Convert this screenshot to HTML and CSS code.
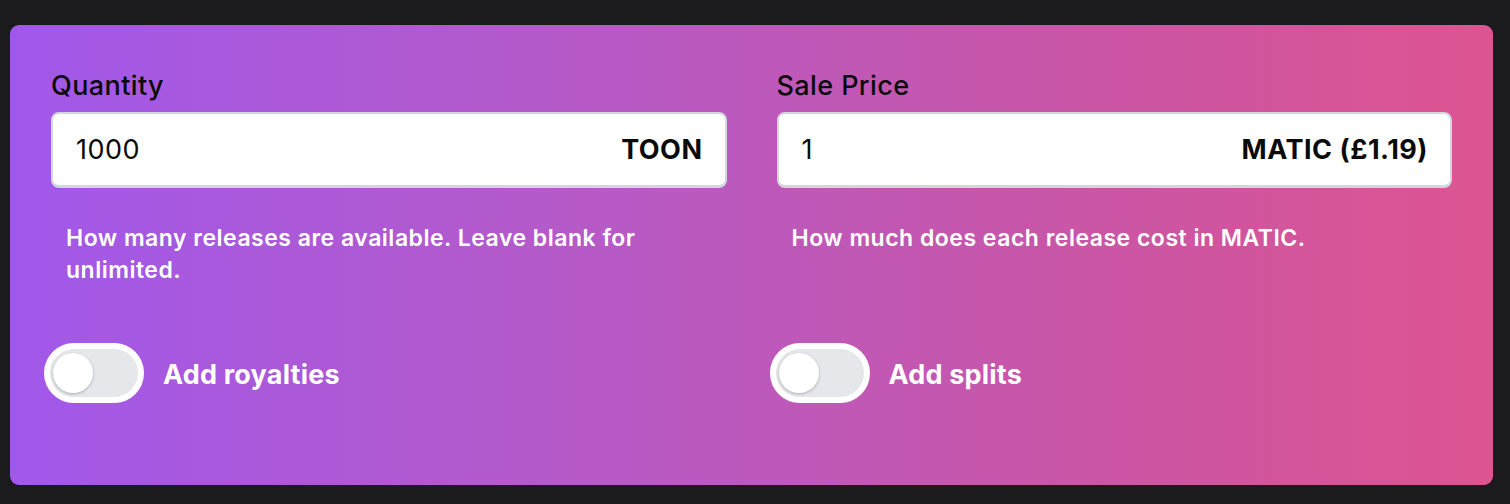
FILE: index.html
```html
<!DOCTYPE html>
<html>
<head>
<meta charset="utf-8">
<link rel="stylesheet" href="styles.css">
</head>
<body>
<div class="card">
  <div class="grid">
    <div class="field">
      <label class="label">Quantity</label>
      <div class="input">
        <span class="value">1000</span>
        <span class="unit">TOON</span>
      </div>
      <p class="help">How many releases are available. Leave blank for unlimited.</p>
    </div>
    <div class="field">
      <label class="label">Sale Price</label>
      <div class="input">
        <span class="value">1</span>
        <span class="unit">MATIC (£1.19)</span>
      </div>
      <p class="help">How much does each release cost in MATIC.</p>
    </div>
    <div class="toggle-row">
      <span class="toggle"><span class="knob"></span></span>
      <span class="toggle-label">Add royalties</span>
    </div>
    <div class="toggle-row">
      <span class="toggle"><span class="knob"></span></span>
      <span class="toggle-label">Add splits</span>
    </div>
  </div>
</div>
</body>
</html>
```

FILE: styles.css
```css
html, body {
  margin: 0;
  padding: 0;
  background: #1b1b1d;
  font-family: Inter, "Noto Sans", sans-serif;
}
body {
  padding: 25px 17px 19px 10px;
}
.card {
  height: 460px;
  box-sizing: border-box;
  border-radius: 9px;
  background: linear-gradient(90deg, #a158ea 0%, #b75ac6 40%, #c856a8 70%, #dd5491 100%);
  padding: 46px 41px 0 41px;
}
.grid {
  display: grid;
  grid-template-columns: 1fr 1fr;
  column-gap: 50px;
}
.field {
  display: flex;
  flex-direction: column;
}
.label {
  font-size: 27px;
  font-weight: 500;
  letter-spacing: 0.4px;
  color: #0b0b0b;
  line-height: 30px;
  margin-bottom: 11px;
}
.input {
  height: 76px;
  box-sizing: border-box;
  background: #fff;
  border: 2px solid #d3d6dc;
  border-bottom-width: 3px;
  border-radius: 8px;
  display: flex;
  align-items: center;
  justify-content: space-between;
  padding: 0 22px 0 23px;
  font-size: 27px;
  letter-spacing: 0.5px;
  color: #0a0a0a;
}
.unit {
  font-weight: 700;
}
.help {
  margin: 34px 0 0 15px;
  font-size: 23px;
  font-weight: 600;
  letter-spacing: 0.5px;
  color: #fff;
  line-height: 32px;
  min-height: 64px;
}
.toggle-row {
  display: flex;
  align-items: center;
  margin-top: 57px;
  margin-left: -7px;
}
.toggle {
  width: 100px;
  height: 60px;
  box-sizing: border-box;
  border: 6px solid #fff;
  border-radius: 30px;
  background: #e5e7eb;
  display: flex;
  align-items: center;
  padding-left: 3px;
}
.knob {
  width: 40px;
  height: 40px;
  border-radius: 50%;
  background: #fff;
  box-shadow: 0 1px 3px rgba(0,0,0,0.25);
}
.toggle-label {
  margin-left: 19px;
  font-size: 27px;
  font-weight: 700;
  letter-spacing: 0.2px;
  color: #fff;
  padding-top: 3px;
}
```
